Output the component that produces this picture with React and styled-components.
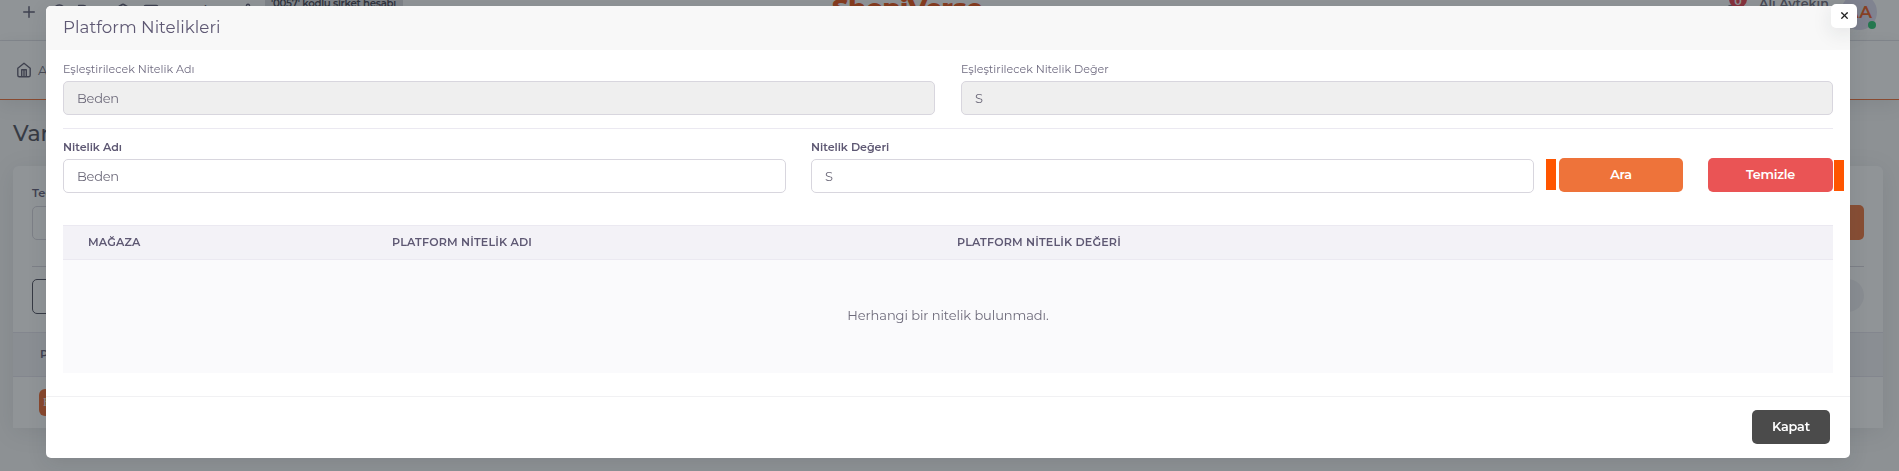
import React from "react";
import styled, { createGlobalStyle } from "styled-components";
import { Plus, X, Search, CornerRightDown, Package, Mail, Settings, Bell } from "lucide-react";

const GlobalStyle = createGlobalStyle`
  *, *::before, *::after { box-sizing: border-box; }
  html, body { margin: 0; height: 100%; overflow: hidden; }
  body {
    background: #f8f8f8;
    color: #6e6b7b;
    font-family: Montserrat, Inter, "Open Sans", sans-serif;
    font-size: 13px;
  }
  input, button { font-family: inherit; }
`;

const Page = styled.div`
  height: 471px;
  overflow: hidden;
`;

const TopBar = styled.header`
  height: 41px;
  display: flex;
  align-items: flex-start;
  padding: 0 20px;
  background: #fff;
  border-bottom: 1px solid #e4e4ea;
`;

const Tools = styled.div`
  display: flex;
  align-items: flex-start;
  padding-top: 3px;
  color: #5b5870;
  width: 640px;
`;

const ToolIcon = styled.span`
  display: flex;
  width: ${(p) => p.$width}px;
`;

const Menu = styled.span`
  width: 60px;
  margin-left: 4px;
  margin-top: -1px;
  font-size: 14px;
  font-weight: 500;
`;

const CompanyTag = styled.span`
  margin: -9px 0 0 3px;
  width: 138px;
  padding: 3px 0 0 6px;
  height: 22px;
  background: #dcdce0;
  border-radius: 4px;
  color: #3f3d4c;
  font-size: 10.2px;
  font-weight: 600;
  letter-spacing: -0.3px;
  white-space: nowrap;
`;

const Logo = styled.div`
  margin: -5px 0 0 172px;
  color: #ea4f0f;
  font-size: 26px;
  line-height: 26px;
  font-weight: 800;
  letter-spacing: -0.6px;
`;

const User = styled.div`
  display: flex;
  align-items: flex-start;
  margin-left: auto;
  color: #6e6b7b;
`;

const BellBox = styled.span`
  display: flex;
  padding-top: 4px;
`;

const Count = styled.span`
  width: 18px;
  height: 18px;
  margin: -10px 12px 0 -11px;
  border-radius: 9px;
  background: #ea3b4a;
  color: #fff;
  font-size: 11px;
  font-weight: 600;
  line-height: 22px;
  text-align: center;
`;

const UserName = styled.span`
  width: 74px;
  margin-top: -4px;
  font-weight: 600;
  font-size: 12.6px;
  line-height: 16px;
  white-space: nowrap;
`;

const Avatar = styled.span`
  position: relative;
  width: 36px;
  height: 36px;
  margin: -6px 2px 0 8px;
  border-radius: 50%;
  background: #dedcf0;
  color: #f05a1a;
  font-size: 17px;
  font-weight: 600;
  line-height: 36px;
  text-align: center;

  &::after {
    content: "";
    position: absolute;
    right: 1px;
    bottom: 1px;
    width: 8px;
    height: 8px;
    border-radius: 50%;
    background: #28c76f;
  }
`;

const NavBar = styled.nav`
  height: 59px;
  display: flex;
  align-items: center;
  gap: 6px;
  padding: 0 16px;
  background: #fff;
  border-bottom: 1px solid #ee6a30;
  box-shadow: 0 4px 18px rgba(34, 41, 47, 0.1);
`;

const PageTitle = styled.h2`
  margin: 20px 0 0 13px;
  height: 46px;
  color: #4d4d58;
  font-size: 22px;
  line-height: 27px;
  font-weight: 500;
`;

const Card = styled.section`
  margin: 0 16px 0 13px;
  height: 262px;
  display: flex;
  flex-direction: column;
  background: #fff;
  border-radius: 6px 6px 0 0;
  box-shadow: 0 4px 24px rgba(34, 41, 47, 0.1);
`;

const CardFilters = styled.div`
  height: 101px;
  margin: 0 19px;
  padding-top: 20px;
  display: flex;
  justify-content: space-between;
  border-bottom: 1px solid #d8d6de;
`;

const CardField = styled.label`
  width: 300px;
  color: #5e5873;
  font-size: 11.5px;
  line-height: 15px;
  font-weight: 600;

  &::after {
    content: "";
    display: block;
    height: 34px;
    margin-top: 5px;
    border: 1px solid #d8d6de;
    border-radius: 5px;
  }
`;

const CardButton = styled.span`
  width: 120px;
  height: 35px;
  margin-top: 19px;
  border-radius: 5px;
  background: #ee733a;
`;

const CardActions = styled.div`
  height: 65px;
  margin: 0 19px;
  padding-top: 12px;
  display: flex;
  justify-content: space-between;
`;

const OutlineBox = styled.span`
  width: 120px;
  height: 35px;
  border: 1px solid #4b4b5a;
  border-radius: 5px;
`;

const Round = styled.span`
  width: 33px;
  height: 33px;
  border-radius: 50%;
  background: #f1f1f4;
`;

const CardHead = styled.div`
  height: 45px;
  padding: 14px 27px;
  background: #f3f2f7;
  border-top: 1px solid #e4e2ec;
  border-bottom: 1px solid #e4e2ec;
  color: #5e5873;
  font-size: 11.5px;
  font-weight: 600;
`;

const CardRow = styled.div`
  padding: 12px 26px;
`;

const Chip = styled.span`
  display: block;
  width: 60px;
  height: 27px;
  padding-left: 4px;
  border-radius: 6px;
  background: #f0662a;
  color: #fff;
  font: 12px/26px "Liberation Serif", serif;
`;

const Backdrop = styled.div`
  position: fixed;
  inset: 0;
  z-index: 10;
  display: flex;
  align-items: flex-start;
  padding: 6px 49px 0 46px;
  background: rgba(34, 41, 47, 0.5);
`;

const Dialog = styled.div`
  position: relative;
  width: 100%;
  height: 452px;
  display: flex;
  flex-direction: column;
  background: #fff;
  border-radius: 5px;
  box-shadow: 0 5px 20px rgba(34, 41, 47, 0.1);
`;

const DialogHeader = styled.div`
  height: 44px;
  padding: 0 17px;
  border-radius: 5px 5px 0 0;
  background: #f8f8f8;
`;

const DialogTitle = styled.h5`
  margin: 0;
  color: #5e5873;
  font-size: 16.7px;
  line-height: 43px;
  font-weight: 400;
  letter-spacing: 0.04px;
`;

const CloseButton = styled.button`
  position: absolute;
  top: -2px;
  right: -7px;
  width: 26px;
  height: 24px;
  display: flex;
  align-items: center;
  justify-content: center;
  padding: 0 0 1px;
  border: 0;
  border-radius: 5px;
  background: #fff;
  color: #222;
  box-shadow: 0 5px 20px rgba(34, 41, 47, 0.1);
`;

const DialogBody = styled.div`
  height: 346px;
  padding: 12px 17px 0;
`;

const FieldRow = styled.div`
  display: grid;
  grid-template-columns: ${(p) => p.$columns};
  column-gap: ${(p) => p.$gap}px;
`;

const Field = styled.label`
  display: flex;
  flex-direction: column;
  min-width: 0;
`;

const FieldLabel = styled.span`
  height: 19px;
  color: ${(p) => (p.$strong ? "#5e5873" : "#6f6b80")};
  font-size: 11.14px;
  line-height: 15px;
  font-weight: ${(p) => (p.$strong ? 600 : 400)};
  letter-spacing: ${(p) => (p.$strong ? -0.04 : -0.02)}px;
`;

const Input = styled.input`
  width: 100%;
  height: 34px;
  padding: 0 13px;
  border: 1px solid #d8d6de;
  border-radius: 5px;
  background: ${(p) => (p.disabled ? "#efefef" : "#fff")};
  color: #6e6b7b;
  font-size: 13px;
  font-weight: 400;
  letter-spacing: -0.25px;
`;

const Divider = styled.hr`
  margin: 13px 0 11px;
  border: 0;
  border-top: 1px solid #ebe9f1;
`;

const Button = styled.button`
  width: ${(p) => p.$width || "100%"};
  height: 34px;
  padding: 0 0 1px;
  border: 0;
  border-radius: 5px;
  background: ${(p) => p.$color};
  color: #fff;
  font-size: 12.8px;
  font-weight: 600;
  letter-spacing: -0.2px;
`;

const ActionCell = styled.div`
  position: relative;
  padding-top: 18px;
`;

const Marker = styled.i`
  position: absolute;
  top: ${(p) => p.$top}px;
  ${(p) => p.$side}: ${(p) => p.$offset}px;
  width: 10px;
  height: 31px;
  background: #ff5500;
`;

const Table = styled.table`
  width: 100%;
  margin-top: 32px;
  border-collapse: separate;
  border-spacing: 0;
  table-layout: fixed;
`;

const HeadCell = styled.th`
  height: 35px;
  width: ${(p) => p.$width};
  padding: 0 0 2px 26px;
  background: #f3f2f7;
  border-top: 1px solid #ebe9f1;
  border-bottom: 1px solid #ebe9f1;
  color: #5e5873;
  font-size: 11.14px;
  line-height: 14px;
  font-weight: 600;
  letter-spacing: 0.17px;
  text-align: left;

  &:first-child { padding-left: 25px; }
`;

const EmptyCell = styled.td`
  height: 113px;
  padding: 0 0 3px;
  background: #fafafc;
  color: #6e6b7b;
  text-align: center;
  font-size: 13px;
  letter-spacing: -0.08px;
`;

const DialogFooter = styled.div`
  flex: 1;
  display: flex;
  justify-content: flex-end;
  align-items: flex-start;
  padding: 13px 20px 0;
  border-top: 1px solid #f1f1f3;
`;

const HomeIcon = () => (
  <svg width="16" height="16" viewBox="0 0 16 16" fill="none" stroke="#5e5b70" strokeWidth="1.4" strokeLinejoin="round">
    <path d="M1.8 6.2 8 1.2l6.2 5v7c0 .9-.6 1.5-1.5 1.500H3.300c-.9 0-1.500-.6-1.500-1.500z" />
    <path d="M5.700 14.500V7.800h4.600v6.700M8 8v6.500" />
  </svg>
);

export default function App() {
  return (
    <>
      <GlobalStyle />
      <Page>
        <TopBar>
          <Tools>
            <ToolIcon $width={32}><Plus size={18} strokeWidth={2} /></ToolIcon>
            <ToolIcon $width={24}><Search size={16} strokeWidth={2.4} /></ToolIcon>
            <ToolIcon $width={39}><CornerRightDown size={16} strokeWidth={2.4} /></ToolIcon>
            <ToolIcon $width={28}><Package size={16} strokeWidth={2.4} /></ToolIcon>
            <ToolIcon $width={33}><Mail size={16} strokeWidth={2.6} /></ToolIcon>
            <Menu>Webt</Menu>
            <ToolIcon $width={22}><Settings size={16} strokeWidth={2.2} /></ToolIcon>
            <CompanyTag>'0057' kodlu şirket hesabı</CompanyTag>
          </Tools>
          <Logo>ShopiVerse</Logo>
          <User>
            <BellBox><Bell size={18} /></BellBox>
            <Count>0</Count>
            <UserName>Ali Aytekin</UserName>
            <Avatar>AA</Avatar>
          </User>
        </TopBar>
        <NavBar>
          <HomeIcon />
          <span>Anasayfa</span>
        </NavBar>
        <PageTitle>Varyant</PageTitle>
        <Card>
          <CardFilters>
            <CardField>Tedarikçi</CardField>
            <CardButton />
          </CardFilters>
          <CardActions>
            <OutlineBox />
            <Round />
          </CardActions>
          <CardHead>PLATFORM</CardHead>
          <CardRow><Chip>H</Chip></CardRow>
        </Card>
      </Page>
      <Backdrop>
        <Dialog role="dialog">
          <DialogHeader>
            <DialogTitle>Platform Nitelikleri</DialogTitle>
          </DialogHeader>
          <CloseButton aria-label="Kapat"><X size={11} strokeWidth={2.8} /></CloseButton>
          <DialogBody>
            <FieldRow $columns="1fr 1fr" $gap={26}>
              <Field>
                <FieldLabel>Eşleştirilecek Nitelik Adı</FieldLabel>
                <Input disabled value="Beden" />
              </Field>
              <Field>
                <FieldLabel>Eşleştirilecek Nitelik Değer</FieldLabel>
                <Input disabled value="S" />
              </Field>
            </FieldRow>
            <Divider />
            <FieldRow $columns="1fr 1fr 124px 125px" $gap={25}>
              <Field>
                <FieldLabel $strong>Nitelik Adı</FieldLabel>
                <Input defaultValue="Beden" />
              </Field>
              <Field>
                <FieldLabel $strong>Nitelik Değeri</FieldLabel>
                <Input defaultValue="S" />
              </Field>
              <ActionCell>
                <Marker $side="left" $offset={-13} $top={19} />
                <Button $color="#ee733a">Ara</Button>
              </ActionCell>
              <ActionCell>
                <Marker $side="right" $offset={-11} $top={20} />
                <Button $color="#ea5455">Temizle</Button>
              </ActionCell>
            </FieldRow>
            <Table>
              <thead>
                <tr>
                  <HeadCell $width="303px">MAĞAZA</HeadCell>
                  <HeadCell $width="565px">PLATFORM NİTELİK ADI</HeadCell>
                  <HeadCell>PLATFORM NİTELİK DEĞERİ</HeadCell>
                </tr>
              </thead>
              <tbody>
                <tr>
                  <EmptyCell colSpan={3}>Herhangi bir nitelik bulunmadı.</EmptyCell>
                </tr>
              </tbody>
            </Table>
          </DialogBody>
          <DialogFooter>
            <Button $width="78px" $color="#4b4b4b">Kapat</Button>
          </DialogFooter>
        </Dialog>
      </Backdrop>
    </>
  );
}
